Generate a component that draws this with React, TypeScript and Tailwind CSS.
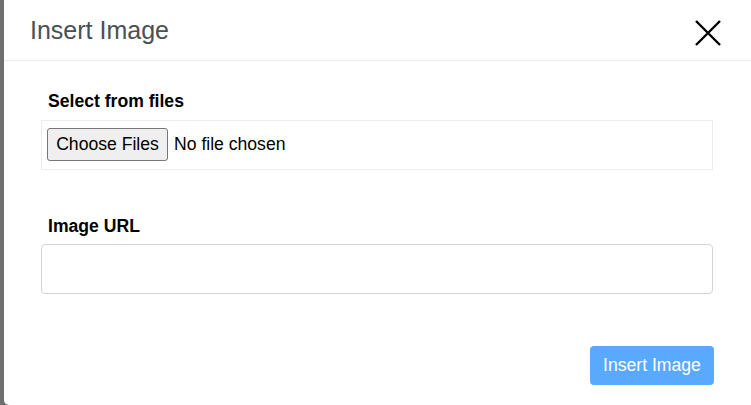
export default function App() {
  return (
    <div className="flex h-[405px] w-[751px] overflow-hidden bg-[#6f6f6f] font-['Liberation_Sans',Arial,sans-serif]">
      <div className="ml-[4px] h-[405px] flex-1 rounded-bl-[5px] bg-white">
        <div className="flex h-[61px] items-start justify-between border-b border-[#e9ecef] pl-[26px] pr-[30px]">
          <h5 className="pt-[15px] text-[25px] leading-[30px] text-[#495057]">Insert Image</h5>
          <button type="button" aria-label="Close" className="mt-[20px]">
            <svg width="26" height="26" viewBox="0 0 26 26" fill="none" stroke="#000" strokeWidth="2.4">
              <path d="M1 1 L25 25 M25 1 L1 25" />
            </svg>
          </button>
        </div>
        <div className="pl-[37px] text-black">
          <label className="mt-[27px] ml-[7px] block h-[32px] text-[17.6px] font-bold leading-[26px]">
            Select from files
          </label>
          <div className="flex h-[50px] w-[672px] items-start border border-[#ececec] pt-[7px] pl-[5px]">
            <div className="flex items-center">
              <span className="flex h-[33px] w-[121px] items-center justify-center rounded-[3px] border border-[#767676] bg-[#efefef] text-[17.6px]">
                Choose Files
              </span>
              <span className="ml-[6px] text-[17.6px]">No file chosen</span>
            </div>
          </div>
          <label className="mt-[43px] ml-[7px] block h-[31px] text-[17.6px] font-bold leading-[26px]">
            Image URL
          </label>
          <input
            type="text"
            className="block h-[50px] w-[672px] rounded-[4px] border border-[#d4d4d4] px-3 text-[17.6px] outline-none"
          />
          <div className="mt-[52px] flex w-[673px] justify-end">
            <button
              type="button"
              className="h-[39px] w-[124px] rounded-[4px] bg-[#59a9ff] text-[17.6px] text-white"
            >
              Insert Image
            </button>
          </div>
        </div>
      </div>
    </div>
  );
}
